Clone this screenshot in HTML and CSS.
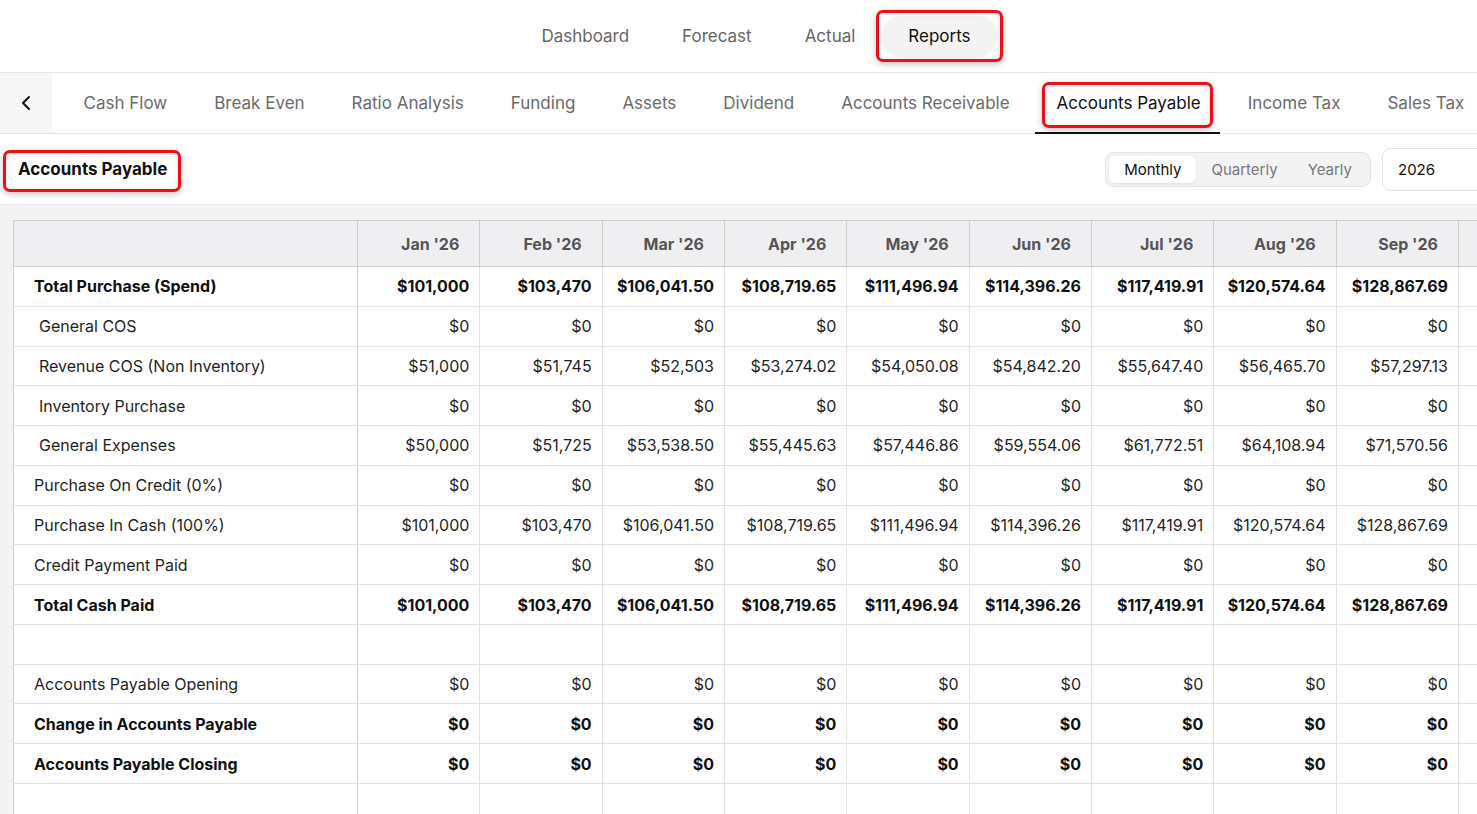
FILE: index.html
```html
<!DOCTYPE html>
<html lang="en">
<head>
  <meta charset="UTF-8">
  <meta name="viewport" content="width=device-width, initial-scale=1.0">
  <title>Accounts Payable</title>
  <link rel="stylesheet" href="styles.css">
</head>
<body>
  <div class="app">
    <nav class="topnav">
      <a class="topnav-item">Dashboard</a>
      <a class="topnav-item">Forecast</a>
      <a class="topnav-item">Actual</a>
      <a class="topnav-item active mark">Reports</a>
    </nav>

    <div class="tabbar">
      <button class="back-btn" aria-label="Back">
        <svg width="14" height="16" viewBox="0 0 14 16"><polyline points="10,2 4,8 10,14" fill="none" stroke="#111" stroke-width="2" stroke-linecap="round" stroke-linejoin="round"/></svg>
      </button>
      <div class="tabs">
        <a class="tab">Cash Flow</a>
        <a class="tab">Break Even</a>
        <a class="tab">Ratio Analysis</a>
        <a class="tab">Funding</a>
        <a class="tab">Assets</a>
        <a class="tab">Dividend</a>
        <a class="tab">Accounts Receivable</a>
        <a class="tab active"><span class="mark">Accounts Payable</span></a>
        <a class="tab">Income Tax</a>
        <a class="tab">Sales Tax</a>
      </div>
    </div>

    <div class="titlebar">
      <h1 class="page-title mark">Accounts Payable</h1>
      <div class="controls">
        <div class="segmented">
          <button class="seg active">Monthly</button>
          <button class="seg">Quarterly</button>
          <button class="seg">Yearly</button>
        </div>
        <div class="year-select">2026</div>
      </div>
    </div>

    <div class="content">
      <div class="table-wrap">
        <table class="report">
          <colgroup>
            <col class="col-label">
            <col class="col-month"><col class="col-month"><col class="col-month">
            <col class="col-month"><col class="col-month"><col class="col-month">
            <col class="col-month"><col class="col-month"><col class="col-month">
            <col class="col-month">
          </colgroup>
          <thead>
            <tr>
              <th></th>
              <th>Jan '26</th><th>Feb '26</th><th>Mar '26</th><th>Apr '26</th><th>May '26</th>
              <th>Jun '26</th><th>Jul '26</th><th>Aug '26</th><th>Sep '26</th><th></th>
            </tr>
          </thead>
          <tbody>
            <tr class="total">
              <td>Total Purchase (Spend)</td>
              <td>$101,000</td><td>$103,470</td><td>$106,041.50</td><td>$108,719.65</td><td>$111,496.94</td>
              <td>$114,396.26</td><td>$117,419.91</td><td>$120,574.64</td><td>$128,867.69</td><td></td>
            </tr>
            <tr class="sub">
              <td>General COS</td>
              <td>$0</td><td>$0</td><td>$0</td><td>$0</td><td>$0</td><td>$0</td><td>$0</td><td>$0</td><td>$0</td><td></td>
            </tr>
            <tr class="sub">
              <td>Revenue COS (Non Inventory)</td>
              <td>$51,000</td><td>$51,745</td><td>$52,503</td><td>$53,274.02</td><td>$54,050.08</td>
              <td>$54,842.20</td><td>$55,647.40</td><td>$56,465.70</td><td>$57,297.13</td><td></td>
            </tr>
            <tr class="sub">
              <td>Inventory Purchase</td>
              <td>$0</td><td>$0</td><td>$0</td><td>$0</td><td>$0</td><td>$0</td><td>$0</td><td>$0</td><td>$0</td><td></td>
            </tr>
            <tr class="sub">
              <td>General Expenses</td>
              <td>$50,000</td><td>$51,725</td><td>$53,538.50</td><td>$55,445.63</td><td>$57,446.86</td>
              <td>$59,554.06</td><td>$61,772.51</td><td>$64,108.94</td><td>$71,570.56</td><td></td>
            </tr>
            <tr>
              <td>Purchase On Credit (0%)</td>
              <td>$0</td><td>$0</td><td>$0</td><td>$0</td><td>$0</td><td>$0</td><td>$0</td><td>$0</td><td>$0</td><td></td>
            </tr>
            <tr>
              <td>Purchase In Cash (100%)</td>
              <td>$101,000</td><td>$103,470</td><td>$106,041.50</td><td>$108,719.65</td><td>$111,496.94</td>
              <td>$114,396.26</td><td>$117,419.91</td><td>$120,574.64</td><td>$128,867.69</td><td></td>
            </tr>
            <tr>
              <td>Credit Payment Paid</td>
              <td>$0</td><td>$0</td><td>$0</td><td>$0</td><td>$0</td><td>$0</td><td>$0</td><td>$0</td><td>$0</td><td></td>
            </tr>
            <tr class="total">
              <td>Total Cash Paid</td>
              <td>$101,000</td><td>$103,470</td><td>$106,041.50</td><td>$108,719.65</td><td>$111,496.94</td>
              <td>$114,396.26</td><td>$117,419.91</td><td>$120,574.64</td><td>$128,867.69</td><td></td>
            </tr>
            <tr class="spacer">
              <td></td><td></td><td></td><td></td><td></td><td></td><td></td><td></td><td></td><td></td><td></td>
            </tr>
            <tr>
              <td>Accounts Payable Opening</td>
              <td>$0</td><td>$0</td><td>$0</td><td>$0</td><td>$0</td><td>$0</td><td>$0</td><td>$0</td><td>$0</td><td></td>
            </tr>
            <tr class="total">
              <td>Change in Accounts Payable</td>
              <td>$0</td><td>$0</td><td>$0</td><td>$0</td><td>$0</td><td>$0</td><td>$0</td><td>$0</td><td>$0</td><td></td>
            </tr>
            <tr class="total">
              <td>Accounts Payable Closing</td>
              <td>$0</td><td>$0</td><td>$0</td><td>$0</td><td>$0</td><td>$0</td><td>$0</td><td>$0</td><td>$0</td><td></td>
            </tr>
            <tr class="spacer">
              <td></td><td></td><td></td><td></td><td></td><td></td><td></td><td></td><td></td><td></td><td></td>
            </tr>
          </tbody>
        </table>
      </div>
    </div>
  </div>
</body>
</html>
```

FILE: styles.css
```css
* {
  box-sizing: border-box;
}

html, body {
  margin: 0;
  height: 100%;
  overflow: hidden;
}

body {
  background: #fff;
  color: #1b1b1b;
  font-family: 'Inter', 'Liberation Sans', sans-serif;
}

.app {
  width: 1512px;
  height: 100vh;
  display: flex;
  flex-direction: column;
}

/* red annotation boxes drawn over highlighted items */
.mark {
  position: relative;
}

.mark::after {
  content: '';
  position: absolute;
  inset: -6px;
  border: 3px solid #e8101a;
  border-radius: 7px;
  box-shadow: 0 2px 6px rgba(0, 0, 0, 0.25), inset 0 1px 4px rgba(0, 0, 0, 0.15);
  pointer-events: none;
}

/* top navigation */
.topnav {
  height: 73px;
  flex: none;
  display: flex;
  justify-content: center;
  align-items: center;
  border-bottom: 1px solid #e6e6e6;
}

.topnav-item {
  padding: 10px 26.5px;
  font-size: 17px;
  color: #666;
  border-radius: 20px;
  cursor: pointer;
}

.topnav-item.active {
  color: #111;
  background: #f3f3f3;
  box-shadow: 0 1px 3px rgba(0, 0, 0, 0.08);
}

/* report tabs */
.tabbar {
  height: 61px;
  flex: none;
  display: flex;
  border-bottom: 1px solid #e3e3e3;
}

.back-btn {
  width: 52px;
  border: none;
  background: #f6f6f6;
  display: flex;
  align-items: center;
  justify-content: center;
  cursor: pointer;
  padding: 0;
}

.tabs {
  display: flex;
  padding-left: 8px;
}

.tab {
  position: relative;
  display: flex;
  align-items: center;
  padding: 0 23.5px;
  font-size: 17px;
  color: #6b6b6b;
  white-space: nowrap;
  cursor: pointer;
}

.tab.active {
  color: #111;
}

.tab.active::before {
  content: '';
  position: absolute;
  left: 2px;
  right: 4px;
  bottom: -1px;
  height: 2px;
  background: #111;
}

.tab .mark::after {
  inset: -11px -12px -15px -15px;
}

/* title row */
.titlebar {
  height: 71px;
  flex: none;
  display: flex;
  align-items: center;
  justify-content: space-between;
  padding: 0 12px 0 18px;
  border-bottom: 1px solid #e6e6e6;
}

.page-title {
  margin: 0;
  font-size: 17px;
  font-weight: 700;
  color: #111;
}

.page-title::after {
  inset: -9px -14px -13px -15px;
}

.controls {
  display: flex;
  align-items: center;
  gap: 11px;
}

.segmented {
  display: flex;
  padding: 3px;
  background: #f3f3f4;
  border: 1px solid #e2e2e2;
  border-radius: 9px;
}

.seg {
  height: 27px;
  padding: 0 15px;
  border: none;
  border-radius: 6px;
  background: transparent;
  font-family: inherit;
  font-size: 15px;
  color: #777;
  cursor: pointer;
}

.seg.active {
  background: #fff;
  color: #111;
  box-shadow: 0 1px 2px rgba(0, 0, 0, 0.08);
}

.year-select {
  width: 118px;
  height: 43px;
  padding: 0 15px;
  display: flex;
  align-items: center;
  border: 1px solid #e2e2e2;
  border-radius: 9px;
  font-size: 15px;
  color: #111;
}

/* table area */
.content {
  flex: 1;
  background: #f3f3f3;
  padding: 15px 0 0 13px;
  overflow: hidden;
}

.table-wrap {
  overflow: hidden;
  background: #fff;
  height: 100%;
}

.report {
  border-collapse: collapse;
  table-layout: fixed;
  width: 1567px;
  font-size: 16px;
}

.col-label {
  width: 344px;
}

.col-month {
  width: 122.33px;
}

.report th {
  height: 46px;
  background: #efeff1;
  border: 1px solid #cfcfcf;
  text-align: right;
  padding: 0 20px 0 8px;
  font-weight: 700;
  color: #555;
}

.report td {
  height: 39.77px;
  border: 1px solid #e2e2e2;
  text-align: right;
  padding: 0 10px 0 8px;
  color: #1f1f1f;
  white-space: nowrap;
}

.report td:first-child {
  text-align: left;
  padding-left: 20px;
  border-left-color: #cfcfcf;
  border-right-color: #cfcfcf;
}

.report tr.sub td:first-child {
  padding-left: 25px;
}

.report tr.total td {
  font-weight: 700;
  color: #111;
}
```
